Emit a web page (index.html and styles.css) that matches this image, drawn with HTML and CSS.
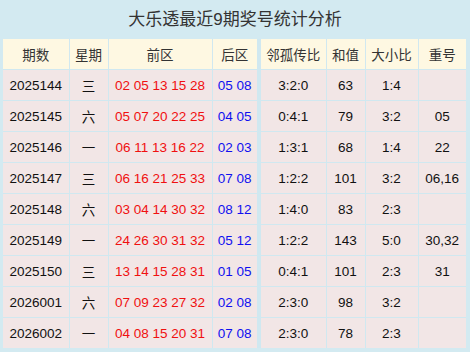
FILE: index.html
```html
<!DOCTYPE html>
<html lang="zh">
<head>
<meta charset="utf-8">
<link rel="stylesheet" href="styles.css">
</head>
<body>
<div class="panel">
  <div class="title">大乐透最近9期奖号统计分析</div>
  <table class="grid">
    <colgroup>
      <col class="c1"><col class="c2"><col class="c3"><col class="c4"><col class="c5"><col class="c6"><col class="c7"><col class="c8">
    </colgroup>
    <thead>
      <tr><th>期数</th><th>星期</th><th>前区</th><th class="sep">后区</th><th>邻孤传比</th><th>和值</th><th>大小比</th><th>重号</th></tr>
    </thead>
    <tbody>
      <tr><td>2025144</td><td>三</td><td class="red">02 05 13 15 28</td><td class="blue sep">05 08</td><td>3:2:0</td><td>63</td><td>1:4</td><td></td></tr>
      <tr><td>2025145</td><td>六</td><td class="red">05 07 20 22 25</td><td class="blue sep">04 05</td><td>0:4:1</td><td>79</td><td>3:2</td><td>05</td></tr>
      <tr><td>2025146</td><td>一</td><td class="red">06 11 13 16 22</td><td class="blue sep">02 03</td><td>1:3:1</td><td>68</td><td>1:4</td><td>22</td></tr>
      <tr><td>2025147</td><td>三</td><td class="red">06 16 21 25 33</td><td class="blue sep">07 08</td><td>1:2:2</td><td>101</td><td>3:2</td><td>06,16</td></tr>
      <tr><td>2025148</td><td>六</td><td class="red">03 04 14 30 32</td><td class="blue sep">08 12</td><td>1:4:0</td><td>83</td><td>2:3</td><td></td></tr>
      <tr><td>2025149</td><td>一</td><td class="red">24 26 30 31 32</td><td class="blue sep">05 12</td><td>1:2:2</td><td>143</td><td>5:0</td><td>30,32</td></tr>
      <tr><td>2025150</td><td>三</td><td class="red">13 14 15 28 31</td><td class="blue sep">01 05</td><td>0:4:1</td><td>101</td><td>2:3</td><td>31</td></tr>
      <tr><td>2026001</td><td>六</td><td class="red">07 09 23 27 32</td><td class="blue sep">02 08</td><td>2:3:0</td><td>98</td><td>3:2</td><td></td></tr>
      <tr><td>2026002</td><td>一</td><td class="red">04 08 15 20 31</td><td class="blue sep">07 08</td><td>2:3:0</td><td>78</td><td>2:3</td><td></td></tr>
    </tbody>
  </table>
</div>
</body>
</html>
```
FILE: styles.css
```css
html, body {
  margin: 0;
  padding: 0;
  background: #d3eaf1;
}
.panel {
  width: 470px;
  height: 352px;
  padding: 0 3px 4px 3px;
  box-sizing: border-box;
  background: #d3eaf1;
  font-family: "Liberation Sans", "Noto Sans CJK SC", sans-serif;
}
.title {
  height: 39px;
  line-height: 40px;
  text-align: center;
  font-size: 17px;
  color: #333;
}
.grid {
  width: 463px;
  border-collapse: collapse;
  table-layout: fixed;
  font-size: 13.5px;
  color: #111;
}
.c1 { width: 66px; }
.c2 { width: 39px; }
.c3 { width: 104px; }
.c4 { width: 47px; }
.c5 { width: 67px; }
.c6 { width: 39px; }
.c7 { width: 53px; }
.c8 { width: 48px; }
.grid th, .grid td {
  border: 1px solid #d0e8f0;
  text-align: center;
  padding: 0;
  white-space: nowrap;
}
.grid tr:first-child th { border-top: none; }
.grid tr > :first-child { border-left: none; }
.grid tr > :last-child { border-right: none; }
.grid tbody tr:last-child td { border-bottom: none; }
.grid th {
  height: 30px;
  background: #fef8e2;
  font-weight: normal;
  color: #333;
  font-size: 13.5px;
}
.grid td {
  height: 30px;
  background: #f2e6e6;
}
.grid .sep { border-right: 4px solid #d0e8f0; }
.red { color: #f01010; }
.blue { color: #1010f0; }
```
